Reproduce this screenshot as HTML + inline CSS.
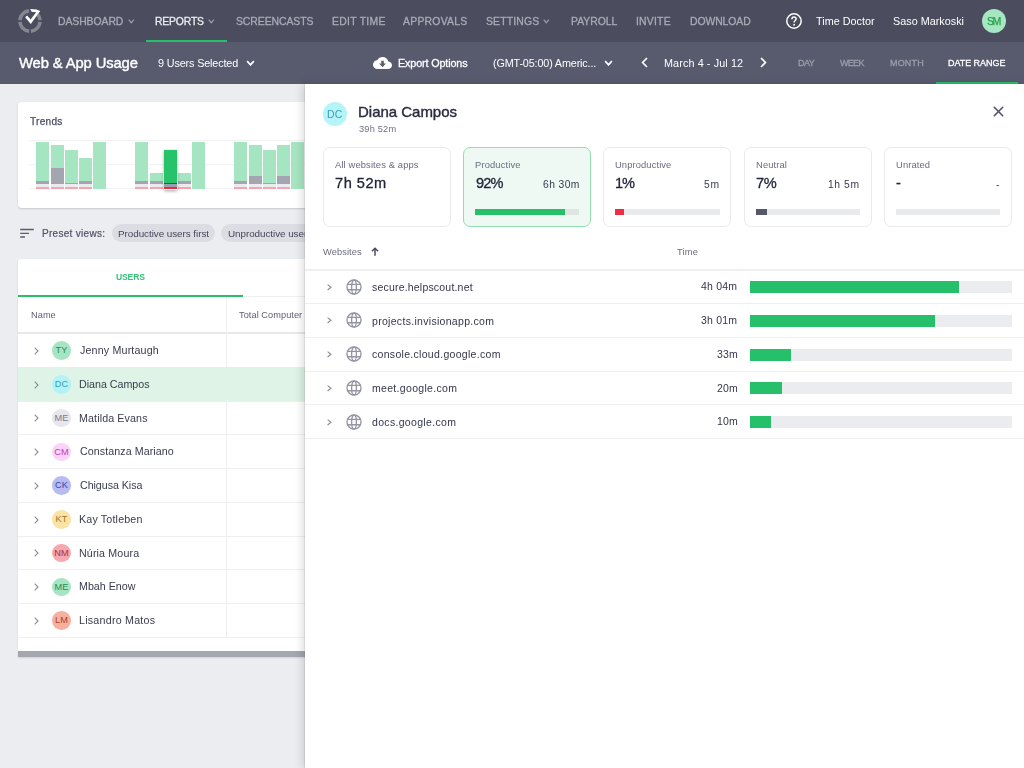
<!DOCTYPE html>
<html><head><meta charset="utf-8"><title>Web &amp; App Usage</title>
<style>
*{box-sizing:border-box;margin:0;padding:0}
html,body{width:1024px;height:768px;overflow:hidden}
body{font-family:"Liberation Sans",sans-serif;background:#ecedf1;position:relative}
.a{position:absolute}
.tx{position:absolute;will-change:transform}
.card{position:absolute;top:147px;width:128px;height:80px;border:1px solid #e9eaee;border-radius:7px;background:#fff}
.bar{position:absolute;top:208.5px;width:104.5px;height:6px;background:#e9eaee}
.bar i{position:absolute;left:0;top:0;height:6px;display:block}
</style></head><body>
<div class="a" style="left:0px;top:0px;width:1024px;height:42px;background:#4b4c5e;"></div>
<div class="a" style="left:0px;top:42px;width:1024px;height:42px;background:#585a6e;"></div>
<svg class="a" style="left:0;top:0" width="50" height="42" viewBox="0 0 50 42">
<g fill="none" stroke="#85868f" stroke-width="3.6">
<path d="M19.9 20.1 A10.2 10.2 0 0 1 29.1 10.9"/>
<path d="M29.1 31.1 A10.2 10.2 0 0 1 19.9 21.9"/>
<path d="M40.1 21.9 A10.2 10.2 0 0 1 30.9 31.1"/>
<path d="M37.6 14.5 A10.2 10.2 0 0 1 40.1 20.1"/>
</g>
<g fill="#fff">
<path d="M25.2 17.2 L27.1 15.6 L30.6 19.6 L36.2 12.2 L31.6 11.8 L30.2 9.0 L36.5 9.6 L40.2 11.0 L30.8 24.0 Z"/>
</g>
</svg>
<div class="a" style="left:146px;top:40px;width:81px;height:2px;background:#27c06a;"></div>
<svg class="a" style="left:128px;top:18.6px" width="7" height="5" viewBox="0 0 7 5"><path d="M0.7 0.7L3.25 3.8L5.8 0.7" fill="none" stroke="#9d9fac" stroke-width="1.3"/></svg>
<svg class="a" style="left:207.7px;top:18.6px" width="7" height="5" viewBox="0 0 7 5"><path d="M0.7 0.7L3.25 3.8L5.8 0.7" fill="none" stroke="#9d9fac" stroke-width="1.3"/></svg>
<svg class="a" style="left:542.5px;top:18.6px" width="7" height="5" viewBox="0 0 7 5"><path d="M0.7 0.7L3.25 3.8L5.8 0.7" fill="none" stroke="#9d9fac" stroke-width="1.3"/></svg>
<svg class="a" style="left:785px;top:12px" width="18" height="18" viewBox="0 0 18 18">
<circle cx="9" cy="9" r="7.2" fill="none" stroke="#fff" stroke-width="1.5"/>
<path d="M6.9 7.3 C6.9 6 7.8 5.1 9 5.1 C10.2 5.1 11.1 5.9 11.1 7 C11.1 8.4 9.1 8.6 9.1 10.4" fill="none" stroke="#fff" stroke-width="1.5"/>
<circle cx="9.1" cy="12.7" r="0.95" fill="#fff"/>
</svg>
<div class="a" style="left:982px;top:8.8px;width:24.3px;height:24.3px;border-radius:50%;background:#a6e6c3"></div>
<svg class="a" style="left:246px;top:60px" width="9" height="6" viewBox="0 0 9 6"><path d="M1.15 1.15L4.5 4.8500000000000005L7.8500000000000005 1.15" fill="none" stroke="#ffffff" stroke-width="1.7"/></svg>
<svg class="a" style="left:373px;top:57px" width="19" height="12" viewBox="0 0 19 12">
<path d="M15.3 4.6 C14.8 1.9 12.4 0 9.6 0 C7.3 0 5.4 1.3 4.4 3.1 C2 3.4 0 5.4 0 7.8 C0 10.2 2 12 4.5 12 L15 12 C17.2 12 19 10.4 19 8.3 C19 6.3 17.3 4.7 15.3 4.6 Z" fill="#fff"/>
<path d="M8.3 3.8 L10.8 3.8 L10.8 6.6 L12.9 6.6 L9.55 10.3 L6.2 6.6 L8.3 6.6 Z" fill="#585a6e"/>
</svg>
<svg class="a" style="left:604px;top:60px" width="9" height="6" viewBox="0 0 9 6"><path d="M1.15 1.15L4.5 4.8500000000000005L7.8500000000000005 1.15" fill="none" stroke="#ffffff" stroke-width="1.7"/></svg>
<svg class="a" style="left:641px;top:57px" width="7" height="11" viewBox="0 0 7 11"><path d="M6 1L1.6 5.5L6 10" fill="none" stroke="#fff" stroke-width="1.7"/></svg>
<svg class="a" style="left:760px;top:57px" width="7" height="11" viewBox="0 0 7 11"><path d="M1 1L5.4 5.5L1 10" fill="none" stroke="#fff" stroke-width="1.7"/></svg>
<div class="a" style="left:936px;top:82px;width:82px;height:2px;background:#27c06a;"></div>
<div class="a" style="left:18px;top:102px;width:300px;height:106px;background:#fff;border-radius:4px;box-shadow:0 1px 2px rgba(0,0,0,0.16)"></div>
<div class="a" style="left:30px;top:140px;width:290px;height:1px;background:#f1f1f4;"></div>
<div class="a" style="left:30px;top:164px;width:290px;height:1px;background:#f1f1f4;"></div>
<div class="a" style="left:30px;top:188px;width:290px;height:1px;background:#f1f1f4;"></div>
<div class="a" style="left:36px;top:142px;width:13px;height:39px;background:#a6e5c2;"></div>
<div class="a" style="left:36px;top:181px;width:13px;height:3px;background:#a3a5b1;"></div>
<div class="a" style="left:36px;top:184px;width:13px;height:3px;background:#ebebf0;"></div>
<div class="a" style="left:36px;top:187px;width:13px;height:2px;background:#f8a4ac;"></div>
<div class="a" style="left:50.5px;top:145px;width:13px;height:23px;background:#a6e5c2;"></div>
<div class="a" style="left:50.5px;top:168px;width:13px;height:16px;background:#a3a5b1;"></div>
<div class="a" style="left:50.5px;top:184px;width:13px;height:3px;background:#ebebf0;"></div>
<div class="a" style="left:50.5px;top:187px;width:13px;height:2px;background:#f8a4ac;"></div>
<div class="a" style="left:65px;top:150px;width:13px;height:33px;background:#a6e5c2;"></div>
<div class="a" style="left:65px;top:183px;width:13px;height:1px;background:#a3a5b1;"></div>
<div class="a" style="left:65px;top:184px;width:13px;height:3px;background:#ebebf0;"></div>
<div class="a" style="left:65px;top:187px;width:13px;height:2px;background:#f8a4ac;"></div>
<div class="a" style="left:79px;top:158px;width:13px;height:23px;background:#a6e5c2;"></div>
<div class="a" style="left:79px;top:181px;width:13px;height:3px;background:#a3a5b1;"></div>
<div class="a" style="left:79px;top:184px;width:13px;height:3px;background:#ebebf0;"></div>
<div class="a" style="left:79px;top:187px;width:13px;height:2px;background:#f8a4ac;"></div>
<div class="a" style="left:93px;top:142px;width:13px;height:47px;background:#a6e5c2;"></div>
<div class="a" style="left:135px;top:142px;width:13px;height:39px;background:#a6e5c2;"></div>
<div class="a" style="left:135px;top:181px;width:13px;height:3px;background:#a3a5b1;"></div>
<div class="a" style="left:135px;top:184px;width:13px;height:3px;background:#ebebf0;"></div>
<div class="a" style="left:135px;top:187px;width:13px;height:2px;background:#f8a4ac;"></div>
<div class="a" style="left:150px;top:173px;width:13px;height:8px;background:#a6e5c2;"></div>
<div class="a" style="left:150px;top:181px;width:13px;height:3px;background:#a3a5b1;"></div>
<div class="a" style="left:150px;top:184px;width:13px;height:3px;background:#ebebf0;"></div>
<div class="a" style="left:150px;top:187px;width:13px;height:2px;background:#f8a4ac;"></div>
<div class="a" style="left:178px;top:173px;width:13px;height:8px;background:#a6e5c2;"></div>
<div class="a" style="left:178px;top:181px;width:13px;height:3px;background:#a3a5b1;"></div>
<div class="a" style="left:178px;top:184px;width:13px;height:3px;background:#ebebf0;"></div>
<div class="a" style="left:178px;top:187px;width:13px;height:2px;background:#f8a4ac;"></div>
<div class="a" style="left:192px;top:142px;width:13px;height:47px;background:#a6e5c2;"></div>
<div class="a" style="left:164px;top:150px;width:13px;height:39.5px;background:transparent;box-shadow:0 1px 3px rgba(0,0,0,0.35)"></div>
<div class="a" style="left:164px;top:150px;width:13px;height:32.69999999999999px;background:#27c36a;"></div>
<div class="a" style="left:164px;top:182.7px;width:13px;height:1.6px;background:#4a4c5e;"></div>
<div class="a" style="left:164px;top:184.3px;width:13px;height:2.5px;background:#9c9eab;"></div>
<div class="a" style="left:164px;top:186.8px;width:13px;height:2.7px;background:#ee2d44;"></div>
<div class="a" style="left:234px;top:142px;width:13px;height:39px;background:#a6e5c2;"></div>
<div class="a" style="left:234px;top:181px;width:13px;height:3px;background:#a3a5b1;"></div>
<div class="a" style="left:234px;top:184px;width:13px;height:3px;background:#ebebf0;"></div>
<div class="a" style="left:234px;top:187px;width:13px;height:2px;background:#f8a4ac;"></div>
<div class="a" style="left:248.5px;top:145px;width:13px;height:31px;background:#a6e5c2;"></div>
<div class="a" style="left:248.5px;top:176px;width:13px;height:8px;background:#a3a5b1;"></div>
<div class="a" style="left:248.5px;top:184px;width:13px;height:3px;background:#ebebf0;"></div>
<div class="a" style="left:248.5px;top:187px;width:13px;height:2px;background:#f8a4ac;"></div>
<div class="a" style="left:263px;top:150px;width:13px;height:33px;background:#a6e5c2;"></div>
<div class="a" style="left:263px;top:183px;width:13px;height:1px;background:#a3a5b1;"></div>
<div class="a" style="left:263px;top:184px;width:13px;height:3px;background:#ebebf0;"></div>
<div class="a" style="left:263px;top:187px;width:13px;height:2px;background:#f8a4ac;"></div>
<div class="a" style="left:277px;top:145px;width:13px;height:31px;background:#a6e5c2;"></div>
<div class="a" style="left:277px;top:176px;width:13px;height:8px;background:#a3a5b1;"></div>
<div class="a" style="left:277px;top:184px;width:13px;height:3px;background:#ebebf0;"></div>
<div class="a" style="left:277px;top:187px;width:13px;height:2px;background:#f8a4ac;"></div>
<div class="a" style="left:291px;top:142px;width:13px;height:47px;background:#a6e5c2;"></div>
<svg class="a" style="left:20px;top:228px" width="15" height="10" viewBox="0 0 15 10"><path d="M0.2 1.5H13.8M0.2 5.4H9M0.2 9H4.9" stroke="#5a5c70" stroke-width="1.4"/></svg>
<div class="a" style="left:112.3px;top:224.3px;width:102.7px;height:18px;background:#dcdde3;border-radius:9px"></div>
<div class="a" style="left:221.3px;top:224.3px;width:120px;height:18px;background:#dcdde3;border-radius:9px"></div>
<div class="a" style="left:18px;top:259px;width:300px;height:398px;background:#fff;border-radius:3px 3px 0 0;box-shadow:0 1px 2px rgba(0,0,0,0.12)"></div>
<div class="a" style="left:18px;top:295px;width:225px;height:2px;background:#27c06a;"></div>
<div class="a" style="left:243px;top:296px;width:75px;height:1px;background:#efeff2;"></div>
<div class="a" style="left:18px;top:332px;width:300px;height:1.5px;background:#e8e8ec;"></div>
<div class="a" style="left:226px;top:297px;width:1px;height:341px;background:#eeeef1;"></div>
<div class="a" style="left:18px;top:366.75px;width:300px;height:1px;background:#efeff2;"></div>
<div class="a" style="left:18px;top:367.25px;width:300px;height:33.75px;background:#dff3e6;"></div>
<div class="a" style="left:18px;top:400.5px;width:300px;height:1px;background:#efeff2;"></div>
<div class="a" style="left:18px;top:434.25px;width:300px;height:1px;background:#efeff2;"></div>
<div class="a" style="left:18px;top:468.0px;width:300px;height:1px;background:#efeff2;"></div>
<div class="a" style="left:18px;top:501.75px;width:300px;height:1px;background:#efeff2;"></div>
<div class="a" style="left:18px;top:535.5px;width:300px;height:1px;background:#efeff2;"></div>
<div class="a" style="left:18px;top:569.25px;width:300px;height:1px;background:#efeff2;"></div>
<div class="a" style="left:18px;top:603.0px;width:300px;height:1px;background:#efeff2;"></div>
<div class="a" style="left:18px;top:636.75px;width:300px;height:1px;background:#efeff2;"></div>
<div class="a" style="left:52.3px;top:341.25px;width:18.5px;height:18.5px;border-radius:50%;background:#a6e5c2;color:#2a8a50;font:9.2px/19px 'Liberation Sans',sans-serif;text-align:center;letter-spacing:0.1px">TY</div>
<svg class="a" style="left:34px;top:346.75px" width="5" height="8" viewBox="0 0 5 8"><path d="M0.7 0.7L4 4L0.7 7.3" fill="none" stroke="#8a8c98" stroke-width="1.1"/></svg>
<div class="a" style="left:52.3px;top:375.00px;width:18.5px;height:18.5px;border-radius:50%;background:#b3f3f8;color:#3aa0b0;font:9.2px/19px 'Liberation Sans',sans-serif;text-align:center;letter-spacing:0.1px">DC</div>
<svg class="a" style="left:34px;top:380.50px" width="5" height="8" viewBox="0 0 5 8"><path d="M0.7 0.7L4 4L0.7 7.3" fill="none" stroke="#8a8c98" stroke-width="1.1"/></svg>
<div class="a" style="left:52.3px;top:408.75px;width:18.5px;height:18.5px;border-radius:50%;background:#e6e6ec;color:#7a7c8a;font:9.2px/19px 'Liberation Sans',sans-serif;text-align:center;letter-spacing:0.1px">ME</div>
<svg class="a" style="left:34px;top:414.25px" width="5" height="8" viewBox="0 0 5 8"><path d="M0.7 0.7L4 4L0.7 7.3" fill="none" stroke="#8a8c98" stroke-width="1.1"/></svg>
<div class="a" style="left:52.3px;top:442.50px;width:18.5px;height:18.5px;border-radius:50%;background:#fbd3f7;color:#c33ac0;font:9.2px/19px 'Liberation Sans',sans-serif;text-align:center;letter-spacing:0.1px">CM</div>
<svg class="a" style="left:34px;top:448.00px" width="5" height="8" viewBox="0 0 5 8"><path d="M0.7 0.7L4 4L0.7 7.3" fill="none" stroke="#8a8c98" stroke-width="1.1"/></svg>
<div class="a" style="left:52.3px;top:476.25px;width:18.5px;height:18.5px;border-radius:50%;background:#b6bcf2;color:#3a45a8;font:9.2px/19px 'Liberation Sans',sans-serif;text-align:center;letter-spacing:0.1px">CK</div>
<svg class="a" style="left:34px;top:481.75px" width="5" height="8" viewBox="0 0 5 8"><path d="M0.7 0.7L4 4L0.7 7.3" fill="none" stroke="#8a8c98" stroke-width="1.1"/></svg>
<div class="a" style="left:52.3px;top:510.00px;width:18.5px;height:18.5px;border-radius:50%;background:#fbe3a6;color:#a07a20;font:9.2px/19px 'Liberation Sans',sans-serif;text-align:center;letter-spacing:0.1px">KT</div>
<svg class="a" style="left:34px;top:515.50px" width="5" height="8" viewBox="0 0 5 8"><path d="M0.7 0.7L4 4L0.7 7.3" fill="none" stroke="#8a8c98" stroke-width="1.1"/></svg>
<div class="a" style="left:52.3px;top:543.75px;width:18.5px;height:18.5px;border-radius:50%;background:#f7a8ae;color:#a8303c;font:9.2px/19px 'Liberation Sans',sans-serif;text-align:center;letter-spacing:0.1px">NM</div>
<svg class="a" style="left:34px;top:549.25px" width="5" height="8" viewBox="0 0 5 8"><path d="M0.7 0.7L4 4L0.7 7.3" fill="none" stroke="#8a8c98" stroke-width="1.1"/></svg>
<div class="a" style="left:52.3px;top:577.50px;width:18.5px;height:18.5px;border-radius:50%;background:#a6e5c2;color:#2a8a50;font:9.2px/19px 'Liberation Sans',sans-serif;text-align:center;letter-spacing:0.1px">ME</div>
<svg class="a" style="left:34px;top:583.00px" width="5" height="8" viewBox="0 0 5 8"><path d="M0.7 0.7L4 4L0.7 7.3" fill="none" stroke="#8a8c98" stroke-width="1.1"/></svg>
<div class="a" style="left:52.3px;top:611.25px;width:18.5px;height:18.5px;border-radius:50%;background:#f6b0a0;color:#a8442e;font:9.2px/19px 'Liberation Sans',sans-serif;text-align:center;letter-spacing:0.1px">LM</div>
<svg class="a" style="left:34px;top:616.75px" width="5" height="8" viewBox="0 0 5 8"><path d="M0.7 0.7L4 4L0.7 7.3" fill="none" stroke="#8a8c98" stroke-width="1.1"/></svg>
<div class="a" style="left:18px;top:651px;width:300px;height:6px;background:#a4a6b0;"></div>
<div class="tx" style="left:30.20px;top:117px;color:#4a4d64;font:normal 10.1px/1 'Liberation Sans',sans-serif;letter-spacing:0.260px;white-space:nowrap;-webkit-text-stroke:0.25px currentColor;">Trends</div>
<div class="tx" style="left:42.40px;top:229px;color:#505268;font:normal 10px/1 'Liberation Sans',sans-serif;letter-spacing:0.300px;white-space:nowrap;-webkit-text-stroke:0.2px currentColor;">Preset views:</div>
<div class="tx" style="left:118.20px;top:229px;color:#44465a;font:normal 9.9px/1 'Liberation Sans',sans-serif;letter-spacing:-0.057px;white-space:nowrap;">Productive users first</div>
<div class="tx" style="left:227.50px;top:229px;color:#44465a;font:normal 9.9px/1 'Liberation Sans',sans-serif;letter-spacing:-0.057px;white-space:nowrap;">Unproductive users first</div>
<div class="tx" style="left:115.80px;top:273px;color:#36c27a;font:bold 8.6px/1 'Liberation Sans',sans-serif;letter-spacing:-0.175px;white-space:nowrap;">USERS</div>
<div class="tx" style="left:30.60px;top:311px;color:#5c5e72;font:normal 9.2px/1 'Liberation Sans',sans-serif;letter-spacing:0.067px;white-space:nowrap;">Name</div>
<div class="tx" style="left:239.30px;top:311px;color:#5c5e72;font:normal 9.2px/1 'Liberation Sans',sans-serif;letter-spacing:0.067px;white-space:nowrap;">Total Computer</div>
<div class="tx" style="left:80.20px;top:345px;color:#3a3c4e;font:normal 10.7px/1 'Liberation Sans',sans-serif;letter-spacing:0.162px;white-space:nowrap;">Jenny Murtaugh</div>
<div class="tx" style="left:79.20px;top:379px;color:#3a3c4e;font:normal 10.7px/1 'Liberation Sans',sans-serif;letter-spacing:-0.018px;white-space:nowrap;">Diana Campos</div>
<div class="tx" style="left:79.20px;top:413px;color:#3a3c4e;font:normal 10.7px/1 'Liberation Sans',sans-serif;letter-spacing:0.117px;white-space:nowrap;">Matilda Evans</div>
<div class="tx" style="left:80.20px;top:446px;color:#3a3c4e;font:normal 10.7px/1 'Liberation Sans',sans-serif;letter-spacing:0.062px;white-space:nowrap;">Constanza Mariano</div>
<div class="tx" style="left:80.20px;top:480px;color:#3a3c4e;font:normal 10.7px/1 'Liberation Sans',sans-serif;letter-spacing:-0.055px;white-space:nowrap;">Chigusa Kisa</div>
<div class="tx" style="left:79.20px;top:514px;color:#3a3c4e;font:normal 10.7px/1 'Liberation Sans',sans-serif;letter-spacing:0.164px;white-space:nowrap;">Kay Totleben</div>
<div class="tx" style="left:79.20px;top:548px;color:#3a3c4e;font:normal 10.7px/1 'Liberation Sans',sans-serif;letter-spacing:0.130px;white-space:nowrap;">Núria Moura</div>
<div class="tx" style="left:79.20px;top:581px;color:#3a3c4e;font:normal 10.7px/1 'Liberation Sans',sans-serif;letter-spacing:0.000px;white-space:nowrap;">Mbah Enow</div>
<div class="tx" style="left:79.20px;top:615px;color:#3a3c4e;font:normal 10.7px/1 'Liberation Sans',sans-serif;letter-spacing:0.231px;white-space:nowrap;">Lisandro Matos</div>
<div class="a" style="left:305px;top:84px;width:719px;height:684px;background:#fff;box-shadow:-1px 0 0 rgba(0,0,0,0.07),-3px 0 8px rgba(0,0,0,0.13)"></div>
<div class="a" style="left:322.5px;top:102px;width:24.4px;height:24.4px;border-radius:50%;background:#b5f4f8"></div>
<div class="a" style="left:322.5px;top:102px;width:24.4px;height:24.4px;font:10.5px/25px 'Liberation Sans',sans-serif;color:#3b9fb2;text-align:center">DC</div>
<svg class="a" style="left:992.5px;top:105.5px" width="11" height="11" viewBox="0 0 11 11"><path d="M1.3 1.3L9.7 9.7M9.7 1.3L1.3 9.7" stroke="#4d5068" stroke-width="1.6" stroke-linecap="round"/></svg>
<div class="card" style="left:322.8px"></div>
<div class="card" style="left:463px;border:1.3px solid #93dcae;background:#edf9f2"></div>
<div class="bar" style="left:474.8px;background:#dfe5e1"><i style="width:90.5px;background:#27c06a"></i></div>
<div class="card" style="left:603.3px"></div>
<div class="bar" style="left:615.1px;background:#e9eaee"><i style="width:9px;background:#ee2d44"></i></div>
<div class="card" style="left:743.7px"></div>
<div class="bar" style="left:755.5px;background:#e9eaee"><i style="width:11px;background:#55586b"></i></div>
<div class="card" style="left:884px"></div>
<div class="bar" style="left:895.8px;background:#e9eaee"></div>
<svg class="a" style="left:370.8px;top:247px" width="8" height="9" viewBox="0 0 8 9"><path d="M4 8.8V1.3M0.9 4.3L4 1.2L7.1 4.3" fill="none" stroke="#4a4c64" stroke-width="1.5"/></svg>
<div class="a" style="left:305px;top:269px;width:719px;height:2px;background:#efeff2;"></div>
<div class="a" style="left:305px;top:303.0px;width:719px;height:1.2px;background:#efeff2;"></div>
<svg class="a" style="left:326.8px;top:283.60px" width="5" height="7" viewBox="0 0 5 7"><path d="M0.6 0.6L3.9 3.3L0.6 6.0" fill="none" stroke="#8a8c98" stroke-width="1.15"/></svg>
<svg class="a" style="left:346.2px;top:278.70px" width="16" height="16" viewBox="0 0 16 16"><g fill="none" stroke="#9496a4" stroke-width="1.35"><circle cx="8" cy="8" r="7"/><ellipse cx="8" cy="8" rx="2.4" ry="7"/><path d="M1.2 5.3H14.8M1.2 10.7H14.8"/></g></svg>
<div class="a" style="left:750.3px;top:281.0px;width:262px;height:12px;background:#ebecf0;"></div>
<div class="a" style="left:750.3px;top:281.0px;width:209px;height:12px;background:#27c06a;"></div>
<div class="a" style="left:305px;top:336.75px;width:719px;height:1.2px;background:#efeff2;"></div>
<svg class="a" style="left:326.8px;top:317.35px" width="5" height="7" viewBox="0 0 5 7"><path d="M0.6 0.6L3.9 3.3L0.6 6.0" fill="none" stroke="#8a8c98" stroke-width="1.15"/></svg>
<svg class="a" style="left:346.2px;top:312.45px" width="16" height="16" viewBox="0 0 16 16"><g fill="none" stroke="#9496a4" stroke-width="1.35"><circle cx="8" cy="8" r="7"/><ellipse cx="8" cy="8" rx="2.4" ry="7"/><path d="M1.2 5.3H14.8M1.2 10.7H14.8"/></g></svg>
<div class="a" style="left:750.3px;top:314.75px;width:262px;height:12px;background:#ebecf0;"></div>
<div class="a" style="left:750.3px;top:314.75px;width:185px;height:12px;background:#27c06a;"></div>
<div class="a" style="left:305px;top:370.5px;width:719px;height:1.2px;background:#efeff2;"></div>
<svg class="a" style="left:326.8px;top:351.10px" width="5" height="7" viewBox="0 0 5 7"><path d="M0.6 0.6L3.9 3.3L0.6 6.0" fill="none" stroke="#8a8c98" stroke-width="1.15"/></svg>
<svg class="a" style="left:346.2px;top:346.20px" width="16" height="16" viewBox="0 0 16 16"><g fill="none" stroke="#9496a4" stroke-width="1.35"><circle cx="8" cy="8" r="7"/><ellipse cx="8" cy="8" rx="2.4" ry="7"/><path d="M1.2 5.3H14.8M1.2 10.7H14.8"/></g></svg>
<div class="a" style="left:750.3px;top:348.5px;width:262px;height:12px;background:#ebecf0;"></div>
<div class="a" style="left:750.3px;top:348.5px;width:41px;height:12px;background:#27c06a;"></div>
<div class="a" style="left:305px;top:404.25px;width:719px;height:1.2px;background:#efeff2;"></div>
<svg class="a" style="left:326.8px;top:384.85px" width="5" height="7" viewBox="0 0 5 7"><path d="M0.6 0.6L3.9 3.3L0.6 6.0" fill="none" stroke="#8a8c98" stroke-width="1.15"/></svg>
<svg class="a" style="left:346.2px;top:379.95px" width="16" height="16" viewBox="0 0 16 16"><g fill="none" stroke="#9496a4" stroke-width="1.35"><circle cx="8" cy="8" r="7"/><ellipse cx="8" cy="8" rx="2.4" ry="7"/><path d="M1.2 5.3H14.8M1.2 10.7H14.8"/></g></svg>
<div class="a" style="left:750.3px;top:382.25px;width:262px;height:12px;background:#ebecf0;"></div>
<div class="a" style="left:750.3px;top:382.25px;width:32px;height:12px;background:#27c06a;"></div>
<div class="a" style="left:305px;top:438.0px;width:719px;height:1.2px;background:#efeff2;"></div>
<svg class="a" style="left:326.8px;top:418.60px" width="5" height="7" viewBox="0 0 5 7"><path d="M0.6 0.6L3.9 3.3L0.6 6.0" fill="none" stroke="#8a8c98" stroke-width="1.15"/></svg>
<svg class="a" style="left:346.2px;top:413.70px" width="16" height="16" viewBox="0 0 16 16"><g fill="none" stroke="#9496a4" stroke-width="1.35"><circle cx="8" cy="8" r="7"/><ellipse cx="8" cy="8" rx="2.4" ry="7"/><path d="M1.2 5.3H14.8M1.2 10.7H14.8"/></g></svg>
<div class="a" style="left:750.3px;top:416.0px;width:262px;height:12px;background:#ebecf0;"></div>
<div class="a" style="left:750.3px;top:416.0px;width:21px;height:12px;background:#27c06a;"></div>
<div class="tx" style="left:57.50px;top:17px;color:#a9aab6;font:normal 10.4px/1 'Liberation Sans',sans-serif;letter-spacing:-0.062px;white-space:nowrap;-webkit-text-stroke:0.3px currentColor;">DASHBOARD</div>
<div class="tx" style="left:236.00px;top:17px;color:#a9aab6;font:normal 10.4px/1 'Liberation Sans',sans-serif;letter-spacing:-0.060px;white-space:nowrap;-webkit-text-stroke:0.3px currentColor;">SCREENCASTS</div>
<div class="tx" style="left:331.60px;top:17px;color:#a9aab6;font:normal 10.4px/1 'Liberation Sans',sans-serif;letter-spacing:0.300px;white-space:nowrap;-webkit-text-stroke:0.3px currentColor;">EDIT TIME</div>
<div class="tx" style="left:403.20px;top:17px;color:#a9aab6;font:normal 10.4px/1 'Liberation Sans',sans-serif;letter-spacing:0.262px;white-space:nowrap;-webkit-text-stroke:0.3px currentColor;">APPROVALS</div>
<div class="tx" style="left:485.80px;top:17px;color:#a9aab6;font:normal 10.4px/1 'Liberation Sans',sans-serif;letter-spacing:0.186px;white-space:nowrap;-webkit-text-stroke:0.3px currentColor;">SETTINGS</div>
<div class="tx" style="left:570.70px;top:17px;color:#a9aab6;font:normal 10.4px/1 'Liberation Sans',sans-serif;letter-spacing:-0.017px;white-space:nowrap;-webkit-text-stroke:0.3px currentColor;">PAYROLL</div>
<div class="tx" style="left:635.80px;top:17px;color:#a9aab6;font:normal 10.4px/1 'Liberation Sans',sans-serif;letter-spacing:0.220px;white-space:nowrap;-webkit-text-stroke:0.3px currentColor;">INVITE</div>
<div class="tx" style="left:689.50px;top:17px;color:#a9aab6;font:normal 10.4px/1 'Liberation Sans',sans-serif;letter-spacing:-0.071px;white-space:nowrap;-webkit-text-stroke:0.3px currentColor;">DOWNLOAD</div>
<div class="tx" style="left:155.20px;top:17px;color:#ececf0;font:normal 10.4px/1 'Liberation Sans',sans-serif;letter-spacing:-0.167px;white-space:nowrap;-webkit-text-stroke:0.3px currentColor;">REPORTS</div>
<div class="tx" style="left:815.90px;top:16px;color:#ffffff;font:normal 10.8px/1 'Liberation Sans',sans-serif;letter-spacing:0.030px;white-space:nowrap;">Time Doctor</div>
<div class="tx" style="left:892.80px;top:16px;color:#ffffff;font:normal 10.8px/1 'Liberation Sans',sans-serif;letter-spacing:0.017px;white-space:nowrap;">Saso Markoski</div>
<div class="tx" style="left:986.90px;top:16px;color:#27a048;font:normal 10.6px/1 'Liberation Sans',sans-serif;letter-spacing:-1.600px;white-space:nowrap;-webkit-text-stroke:0.25px currentColor;">SM</div>
<div class="tx" style="left:18.90px;top:56px;color:#ffffff;font:normal 14.8px/1 'Liberation Sans',sans-serif;letter-spacing:-0.121px;white-space:nowrap;-webkit-text-stroke:0.4px currentColor;">Web &amp; App Usage</div>
<div class="tx" style="left:157.70px;top:58px;color:#ffffff;font:normal 10.8px/1 'Liberation Sans',sans-serif;letter-spacing:-0.133px;white-space:nowrap;">9 Users Selected</div>
<div class="tx" style="left:397.80px;top:58px;color:#ffffff;font:normal 10.8px/1 'Liberation Sans',sans-serif;letter-spacing:-0.138px;white-space:nowrap;-webkit-text-stroke:0.3px currentColor;">Export Options</div>
<div class="tx" style="left:492.90px;top:58px;color:#ffffff;font:normal 10.8px/1 'Liberation Sans',sans-serif;letter-spacing:-0.145px;white-space:nowrap;">(GMT-05:00) Americ...</div>
<div class="tx" style="left:664.40px;top:58px;color:#ffffff;font:normal 10.8px/1 'Liberation Sans',sans-serif;letter-spacing:0.107px;white-space:nowrap;">March 4 - Jul 12</div>
<div class="tx" style="left:797.90px;top:59px;color:#9c9eab;font:normal 9.0px/1 'Liberation Sans',sans-serif;letter-spacing:-0.600px;white-space:nowrap;-webkit-text-stroke:0.3px currentColor;">DAY</div>
<div class="tx" style="left:839.90px;top:59px;color:#9c9eab;font:normal 9.0px/1 'Liberation Sans',sans-serif;letter-spacing:-0.700px;white-space:nowrap;-webkit-text-stroke:0.3px currentColor;">WEEK</div>
<div class="tx" style="left:889.50px;top:59px;color:#9c9eab;font:normal 9.0px/1 'Liberation Sans',sans-serif;letter-spacing:0.175px;white-space:nowrap;-webkit-text-stroke:0.3px currentColor;">MONTH</div>
<div class="tx" style="left:948.20px;top:59px;color:#ffffff;font:normal 9.0px/1 'Liberation Sans',sans-serif;letter-spacing:-0.044px;white-space:nowrap;-webkit-text-stroke:0.3px currentColor;">DATE RANGE</div>
<div class="tx" style="left:358.00px;top:104px;color:#2a2c3e;font:normal 15px/1 'Liberation Sans',sans-serif;letter-spacing:-0.018px;white-space:nowrap;-webkit-text-stroke:0.4px currentColor;">Diana Campos</div>
<div class="tx" style="left:359.00px;top:125px;color:#6e7080;font:normal 9.2px/1 'Liberation Sans',sans-serif;letter-spacing:0.217px;white-space:nowrap;">39h 52m</div>
<div class="tx" style="left:334.80px;top:160px;color:#6a6c7e;font:normal 9.4px/1 'Liberation Sans',sans-serif;letter-spacing:0.122px;white-space:nowrap;">All websites &amp; apps</div>
<div class="tx" style="left:335.20px;top:176px;color:#23253a;font:normal 14.6px/1 'Liberation Sans',sans-serif;letter-spacing:0.520px;white-space:nowrap;-webkit-text-stroke:0.3px currentColor;">7h 52m</div>
<div class="tx" style="left:475.20px;top:160px;color:#6a6c7e;font:normal 9.4px/1 'Liberation Sans',sans-serif;letter-spacing:0.133px;white-space:nowrap;">Productive</div>
<div class="tx" style="left:475.60px;top:176px;color:#23253a;font:normal 14.6px/1 'Liberation Sans',sans-serif;letter-spacing:-0.850px;white-space:nowrap;-webkit-text-stroke:0.3px currentColor;">92%</div>
<div class="tx" style="left:542.80px;top:180px;color:#3a3c4e;font:normal 10.3px/1 'Liberation Sans',sans-serif;letter-spacing:0.400px;white-space:nowrap;">6h 30m</div>
<div class="tx" style="left:615.30px;top:160px;color:#6a6c7e;font:normal 9.4px/1 'Liberation Sans',sans-serif;letter-spacing:0.100px;white-space:nowrap;">Unproductive</div>
<div class="tx" style="left:614.70px;top:176px;color:#23253a;font:normal 14.6px/1 'Liberation Sans',sans-serif;letter-spacing:-1.000px;white-space:nowrap;-webkit-text-stroke:0.3px currentColor;">1%</div>
<div class="tx" style="left:703.90px;top:180px;color:#3a3c4e;font:normal 10.3px/1 'Liberation Sans',sans-serif;letter-spacing:0.700px;white-space:nowrap;">5m</div>
<div class="tx" style="left:755.60px;top:160px;color:#6a6c7e;font:normal 9.4px/1 'Liberation Sans',sans-serif;letter-spacing:0.119px;white-space:nowrap;">Neutral</div>
<div class="tx" style="left:756.00px;top:176px;color:#23253a;font:normal 14.6px/1 'Liberation Sans',sans-serif;letter-spacing:-0.443px;white-space:nowrap;-webkit-text-stroke:0.3px currentColor;">7%</div>
<div class="tx" style="left:828.20px;top:180px;color:#3a3c4e;font:normal 10.3px/1 'Liberation Sans',sans-serif;letter-spacing:0.600px;white-space:nowrap;">1h 5m</div>
<div class="tx" style="left:895.80px;top:160px;color:#6a6c7e;font:normal 9.4px/1 'Liberation Sans',sans-serif;letter-spacing:0.119px;white-space:nowrap;">Unrated</div>
<div class="tx" style="left:896.20px;top:176px;color:#23253a;font:normal 14.6px/1 'Liberation Sans',sans-serif;letter-spacing:-0.443px;white-space:nowrap;-webkit-text-stroke:0.3px currentColor;">-</div>
<div class="tx" style="left:996.40px;top:180px;color:#3a3c4e;font:normal 10.3px/1 'Liberation Sans',sans-serif;letter-spacing:0.567px;white-space:nowrap;">-</div>
<div class="tx" style="left:322.70px;top:248px;color:#6a6c7e;font:normal 9.3px/1 'Liberation Sans',sans-serif;letter-spacing:0.086px;white-space:nowrap;">Websites</div>
<div class="tx" style="left:677.10px;top:248px;color:#6a6c7e;font:normal 9.3px/1 'Liberation Sans',sans-serif;letter-spacing:0.167px;white-space:nowrap;">Time</div>
<div class="tx" style="left:372.40px;top:282px;color:#34364a;font:normal 10.5px/1 'Liberation Sans',sans-serif;letter-spacing:0.195px;white-space:nowrap;">secure.helpscout.net</div>
<div class="tx" style="left:701.30px;top:281px;color:#34364a;font:normal 10.5px/1 'Liberation Sans',sans-serif;letter-spacing:0.200px;white-space:nowrap;">4h 04m</div>
<div class="tx" style="left:372.40px;top:316px;color:#34364a;font:normal 10.5px/1 'Liberation Sans',sans-serif;letter-spacing:0.304px;white-space:nowrap;">projects.invisionapp.com</div>
<div class="tx" style="left:701.30px;top:315px;color:#34364a;font:normal 10.5px/1 'Liberation Sans',sans-serif;letter-spacing:0.200px;white-space:nowrap;">3h 01m</div>
<div class="tx" style="left:372.40px;top:349px;color:#34364a;font:normal 10.5px/1 'Liberation Sans',sans-serif;letter-spacing:0.304px;white-space:nowrap;">console.cloud.google.com</div>
<div class="tx" style="left:717.30px;top:349px;color:#34364a;font:normal 10.5px/1 'Liberation Sans',sans-serif;letter-spacing:0.200px;white-space:nowrap;">33m</div>
<div class="tx" style="left:372.40px;top:383px;color:#34364a;font:normal 10.5px/1 'Liberation Sans',sans-serif;letter-spacing:0.314px;white-space:nowrap;">meet.google.com</div>
<div class="tx" style="left:717.30px;top:383px;color:#34364a;font:normal 10.5px/1 'Liberation Sans',sans-serif;letter-spacing:0.200px;white-space:nowrap;">20m</div>
<div class="tx" style="left:372.40px;top:417px;color:#34364a;font:normal 10.5px/1 'Liberation Sans',sans-serif;letter-spacing:0.321px;white-space:nowrap;">docs.google.com</div>
<div class="tx" style="left:717.30px;top:416px;color:#34364a;font:normal 10.5px/1 'Liberation Sans',sans-serif;letter-spacing:0.200px;white-space:nowrap;">10m</div>
</body></html>
